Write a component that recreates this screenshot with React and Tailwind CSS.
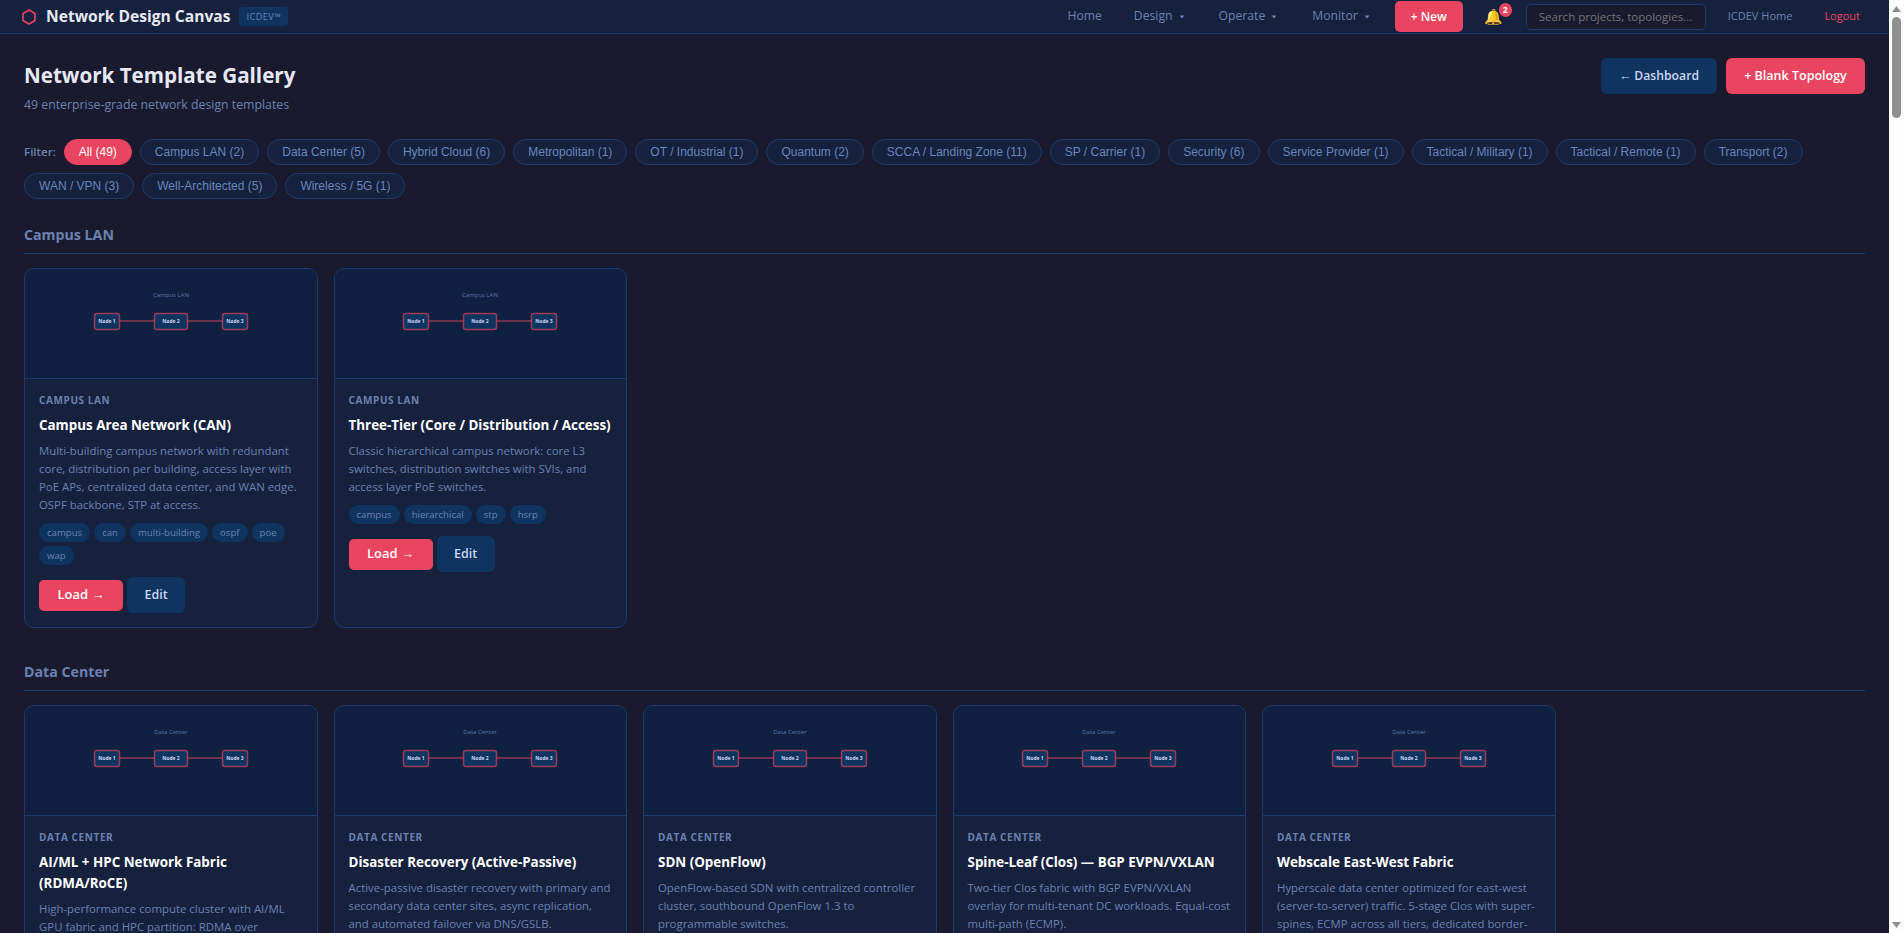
import React from "react";

const F = "font-['Open_Sans',sans-serif]";
const pills = ["All (49)","Campus LAN (2)","Data Center (5)","Hybrid Cloud (6)","Metropolitan (1)","OT / Industrial (1)","Quantum (2)","SCCA / Landing Zone (11)","SP / Carrier (1)","Security (6)","Service Provider (1)","Tactical / Military (1)","Tactical / Remote (1)","Transport (2)","WAN / VPN (3)","Well-Architected (5)","Wireless / 5G (1)"];

const campus = [
  { t: "Campus Area Network (CAN)", d: "Multi-building campus network with redundant core, distribution per building, access layer with PoE APs, centralized data center, and WAN edge. OSPF backbone, STP at access.", tags: ["campus","can","multi-building","ospf","poe","wap"] },
  { t: "Three-Tier (Core / Distribution / Access)", d: "Classic hierarchical campus network: core L3 switches, distribution switches with SVIs, and access layer PoE switches.", tags: ["campus","hierarchical","stp","hsrp"] },
];
const dc = [
  { t: "AI/ML + HPC Network Fabric (RDMA/RoCE)", d: "High-performance compute cluster with AI/ML GPU fabric and HPC partition: RDMA over Converged Ethernet, lossless transport, and high-radix spine switches.", tags: [] },
  { t: "Disaster Recovery (Active-Passive)", d: "Active-passive disaster recovery with primary and secondary data center sites, async replication, and automated failover via DNS/GSLB.", tags: [] },
  { t: "SDN (OpenFlow)", d: "OpenFlow-based SDN with centralized controller cluster, southbound OpenFlow 1.3 to programmable switches.", tags: [] },
  { t: "Spine-Leaf (Clos) — BGP EVPN/VXLAN", d: "Two-tier Clos fabric with BGP EVPN/VXLAN overlay for multi-tenant DC workloads. Equal-cost multi-path (ECMP).", tags: [] },
  { t: "Webscale East-West Fabric", d: "Hyperscale data center optimized for east-west (server-to-server) traffic. 5-stage Clos with super-spines, ECMP across all tiers, dedicated border-leaf pods.", tags: [] },
];

function Preview({ label }) {
  return (
    <div className="h-[110px] bg-[#0f2040] border-b border-[#1e3a6e] flex justify-center">
      <svg width="240" height="109" viewBox="0 0 240 109">
        <text x="120" y="28" textAnchor="middle" fontSize="6" fill="#5c78a8" fontFamily="Open Sans, sans-serif">{label}</text>
        <line x1="68" y1="52" x2="104" y2="52" stroke="#e94560" strokeWidth="2" strokeOpacity="0.45" />
        <line x1="136" y1="52" x2="172" y2="52" stroke="#e94560" strokeWidth="2" strokeOpacity="0.45" />
        <rect x="43.5" y="44.5" width="25" height="16" rx="2.5" fill="#0f3460" stroke="#e94560" strokeWidth="1.5" strokeOpacity="0.65" />
        <rect x="103.5" y="44.5" width="33" height="16" rx="2.5" fill="#0f3460" stroke="#e94560" strokeWidth="1.5" strokeOpacity="0.65" />
        <rect x="171.5" y="44.5" width="25" height="16" rx="2.5" fill="#0f3460" stroke="#e94560" strokeWidth="1.5" strokeOpacity="0.65" />
        {[["Node 1",56],["Node 2",120],["Node 3",184]].map(([n,x]) => (
          <text key={n} x={x} y="54.3" textAnchor="middle" fontSize="5" fontWeight="700" fill="#ccd6f6" fontFamily="Open Sans, sans-serif">{n}</text>
        ))}
      </svg>
    </div>
  );
}

function Card({ c, cat }) {
  return (
    <div className="bg-[#16213e] border border-[#1e3a6e] rounded-[10px] overflow-hidden">
      <Preview label={cat} />
      <div className="p-[14px]">
        <div className="text-[10px] font-bold tracking-[0.6px] uppercase text-[#6b82b0] leading-[14px] mb-[8px]">{cat}</div>
        <div className="text-[13.4px] font-bold text-white leading-[21px] mb-[6px]">{c.t}</div>
        <div className="text-[11.4px] leading-[18px] text-[#6b82b0] mb-[9px]">{c.d}</div>
        {c.tags.length > 0 && (
          <div className="flex flex-wrap gap-[4px] mb-[12px]">
            {c.tags.map((t) => (
              <span key={t} className="bg-[#0f3460] text-[#6b82b0] text-[9.6px] leading-[15px] px-[8px] py-[2px] rounded-full">{t}</span>
            ))}
          </div>
        )}
        {c.tags.length > 0 && (
          <div className="flex items-center gap-[4px]">
            <button className="bg-[#e94560] text-white font-semibold text-[13px] w-[84px] h-[31px] rounded-[5px]">Load <span className="font-['Liberation_Sans',sans-serif]">→</span></button>
            <button className="bg-[#0f3460] text-[#ccd6f6] font-semibold text-[12.5px] w-[58px] h-[36px] rounded-[6px]">Edit</button>
          </div>
        )}
      </div>
    </div>
  );
}

function Section({ name, items }) {
  return (
    <div className="mb-[34px]">
      <h2 className="text-[14.2px] font-bold text-[#6b82b0] leading-[20px] pb-[8px] border-b border-[#1e3a6e] mb-[14px]">{name}</h2>
      <div className="grid grid-cols-6 gap-[16px] items-stretch">
        {items.map((c) => <Card key={c.t} c={c} cat={name} />)}
      </div>
    </div>
  );
}

function Caret() {
  return (
    <svg width="6" height="4" viewBox="0 0 6 4" className="inline-block ml-[6px] align-middle"><path d="M0.5 0.5 H5.5 L3 3.5 Z" fill="#6b82b0" /></svg>
  );
}

export default function App() {
  return (
    <div className={`h-[933px] overflow-hidden flex bg-[#1a1a2e] ${F}`}>
      <div className="flex-1 min-w-0 flex flex-col">
        <nav className="h-[34px] shrink-0 bg-[#16213e] border-b border-[#1e3a6e] flex items-center pl-[22px] pr-[29px]">
          <svg width="14" height="16" viewBox="0 0 14 16" className="mr-[10px]"><path d="M7 1 L13 4.5 V11.5 L7 15 L1 11.5 V4.5 Z" fill="none" stroke="#e94560" strokeWidth="1.6" /></svg>
          <span className="text-[15.6px] font-bold text-[#e6e9f5]">Network Design Canvas</span>
          <span className="ml-[9px] bg-[#0f3460] text-[#6b82b0] text-[9px] leading-[15px] tracking-[0.5px] rounded-[3px] px-[7px] py-[2px]">ICDEV™</span>
          <div className="ml-auto flex items-center text-[12.2px] text-[#6b82b0]">
            <span className="mr-[32px]">Home</span>
            <span className="mr-[34px]">Design<Caret /></span>
            <span className="mr-[35px]">Operate<Caret /></span>
            <span className="mr-[25px]">Monitor<Caret /></span>
            <button className="bg-[#e94560] text-white font-semibold text-[12px] h-[31px] w-[68px] rounded-[5px]">+ New</button>
            <div className="relative ml-[21px] mr-[23px] text-[15px] leading-none">🔔
              <span className="absolute -top-[6px] -right-[9px] w-[13px] h-[14px] rounded-full bg-[#e94560] text-white text-[8.5px] font-bold flex items-center justify-center">2</span>
            </div>
            <input placeholder="Search projects, topologies..." className="w-[180px] h-[26px] bg-[#1a1a2e] border border-[#1e3a6e] rounded-[5px] pl-[12px] pr-[6px] text-[11.5px] placeholder:text-[#757575]" />
            <span className="ml-[22px] text-[11px]">ICDEV Home</span>
            <span className="ml-[32px] text-[11px] text-[#e94560]">Logout</span>
          </div>
        </nav>
        <main className="flex-1 min-h-0 overflow-hidden px-[24px] pt-[24px]">
          <div className="flex items-start justify-between mb-[25px]">
            <div className="pt-[2px]">
              <h1 className="text-[20.6px] font-bold text-[#e6e9f5] leading-[30px] mb-[6px]">Network Template Gallery</h1>
              <p className="text-[12.3px] text-[#6b82b0] leading-[18px]">49 enterprise-grade network design templates</p>
            </div>
            <div className="flex gap-[9px]">
              <button className="bg-[#0f3460] text-[#ccd6f6] font-semibold text-[12.2px] h-[36px] w-[116px] rounded-[6px]">← Dashboard</button>
              <button className="bg-[#e94560] text-white font-semibold text-[12.5px] h-[36px] w-[139px] rounded-[6px]">+ Blank Topology</button>
            </div>
          </div>
          <div className="flex flex-wrap items-center gap-[8px] mb-[26px] font-['Liberation_Sans',sans-serif]">
            <span className={`text-[11.5px] font-semibold text-[#6b82b0] ${F}`}>Filter:</span>
            {pills.map((p, i) => (
              <span key={p} className={i === 0 ? "bg-[#e94560] text-white border border-[#e94560] text-[12px] h-[26px] px-[14px] rounded-full flex items-center" : "border border-[#1e3a6e] bg-[#16213e] text-[#6886bb] text-[12px] h-[26px] px-[14px] rounded-full flex items-center"}>{p}</span>
            ))}
          </div>
          <Section name="Campus LAN" items={campus} />
          <Section name="Data Center" items={dc} />
        </main>
      </div>
      <div className="w-[15px] shrink-0 bg-[#fdfdfd] flex flex-col items-center">
        <div className="h-[17px] flex items-center justify-center">
          <svg width="9" height="6" viewBox="0 0 9 6"><path d="M4.5 0 L9 6 H0 Z" fill="#8f8f8f" /></svg>
        </div>
        <div className="w-[9px] h-[101px] rounded-full bg-[#8f8f8f]" />
        <div className="flex-1" />
        <div className="h-[17px] flex items-center justify-center">
          <svg width="9" height="6" viewBox="0 0 9 6"><path d="M4.5 6 L9 0 H0 Z" fill="#8f8f8f" /></svg>
        </div>
      </div>
    </div>
  );
}
